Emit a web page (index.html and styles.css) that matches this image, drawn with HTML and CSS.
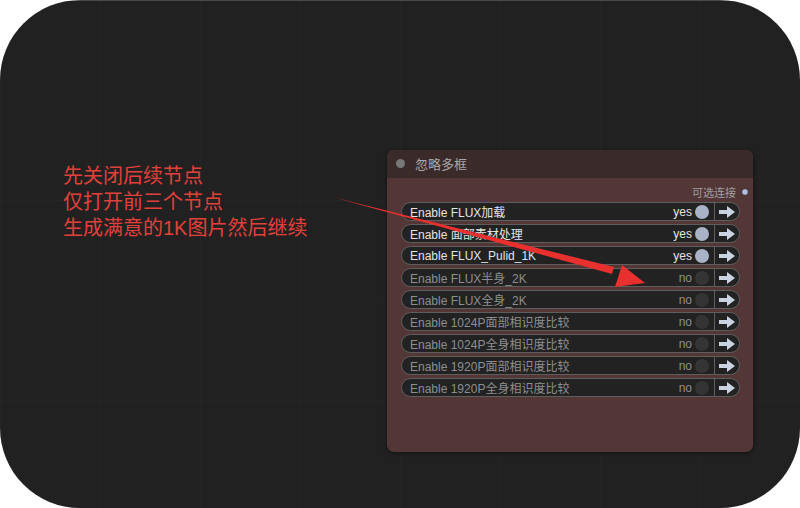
FILE: index.html
```html
<!DOCTYPE html>
<html lang="zh-CN">
<head>
    <meta charset="UTF-8">
    <title>忽略多框</title>
    <link rel="stylesheet" href="styles.css">
</head>
<body>
<div class="canvas">
    <div class="note">
        <div>先关闭后续节点</div>
        <div>仅打开前三个节点</div>
        <div>生成满意的1K图片然后继续</div>
    </div>

    <div class="node">
        <div class="node-title">
            <span class="title-dot"></span>
            <span>忽略多框</span>
        </div>
        <div class="node-body">
            <div class="output">
                <span>可选连接</span>
                <span class="socket"></span>
            </div>

            <div class="widget on">
                <span class="widget-label">Enable FLUX加载</span>
                <span class="widget-value">yes</span><span class="toggle"></span>
                <span class="go"><svg viewBox="0 0 16 12" width="16" height="12"><path d="M0 4h8V0l8 6-8 6V8H0z"/></svg></span>
            </div>
            <div class="widget on">
                <span class="widget-label">Enable 面部素材处理</span>
                <span class="widget-value">yes</span><span class="toggle"></span>
                <span class="go"><svg viewBox="0 0 16 12" width="16" height="12"><path d="M0 4h8V0l8 6-8 6V8H0z"/></svg></span>
            </div>
            <div class="widget on">
                <span class="widget-label">Enable FLUX_Pulid_1K</span>
                <span class="widget-value">yes</span><span class="toggle"></span>
                <span class="go"><svg viewBox="0 0 16 12" width="16" height="12"><path d="M0 4h8V0l8 6-8 6V8H0z"/></svg></span>
            </div>
            <div class="widget">
                <span class="widget-label">Enable FLUX半身_2K</span>
                <span class="widget-value">no</span><span class="toggle"></span>
                <span class="go"><svg viewBox="0 0 16 12" width="16" height="12"><path d="M0 4h8V0l8 6-8 6V8H0z"/></svg></span>
            </div>
            <div class="widget">
                <span class="widget-label">Enable FLUX全身_2K</span>
                <span class="widget-value">no</span><span class="toggle"></span>
                <span class="go"><svg viewBox="0 0 16 12" width="16" height="12"><path d="M0 4h8V0l8 6-8 6V8H0z"/></svg></span>
            </div>
            <div class="widget">
                <span class="widget-label">Enable 1024P面部相识度比较</span>
                <span class="widget-value">no</span><span class="toggle"></span>
                <span class="go"><svg viewBox="0 0 16 12" width="16" height="12"><path d="M0 4h8V0l8 6-8 6V8H0z"/></svg></span>
            </div>
            <div class="widget">
                <span class="widget-label">Enable 1024P全身相识度比较</span>
                <span class="widget-value">no</span><span class="toggle"></span>
                <span class="go"><svg viewBox="0 0 16 12" width="16" height="12"><path d="M0 4h8V0l8 6-8 6V8H0z"/></svg></span>
            </div>
            <div class="widget">
                <span class="widget-label">Enable 1920P面部相识度比较</span>
                <span class="widget-value">no</span><span class="toggle"></span>
                <span class="go"><svg viewBox="0 0 16 12" width="16" height="12"><path d="M0 4h8V0l8 6-8 6V8H0z"/></svg></span>
            </div>
            <div class="widget">
                <span class="widget-label">Enable 1920P全身相识度比较</span>
                <span class="widget-value">no</span><span class="toggle"></span>
                <span class="go"><svg viewBox="0 0 16 12" width="16" height="12"><path d="M0 4h8V0l8 6-8 6V8H0z"/></svg></span>
            </div>
        </div>
    </div>

    <!-- red annotation arrow drawn over the node -->
    <svg class="arrow" width="800" height="508" viewBox="0 0 800 508">
        <path d="M334 197.5 L614 267 L612 274 Z" fill="#e8302e"/>
        <path d="M645 283 L622 265 L615 287 Z" fill="#e8302e"/>
    </svg>
</div>
</body>
</html>
```

FILE: styles.css
```css
body {
    margin: 0;
    padding: 0;
    background-color: #fff;
    font-family: "Liberation Sans", "Noto Sans CJK SC", sans-serif;
}

.canvas {
    position: relative;
    width: 800px;
    height: 508px;
    border-radius: 80px;
    overflow: hidden;
    background-color: #212121;
    background-image:
        linear-gradient(#4a4a4a 1px, transparent 1px),
        linear-gradient(90deg, rgba(255, 255, 255, 0.012) 1px, transparent 1px),
        linear-gradient(rgba(255, 255, 255, 0.012) 1px, transparent 1px);
    background-size: 100% 100%, 100px 100px, 100px 100px;
    background-repeat: no-repeat, repeat, repeat;
}

.note {
    position: absolute;
    left: 63px;
    top: 163px;
    color: #e2403b;
    font-size: 20px;
    line-height: 26px;
}

.node {
    position: absolute;
    left: 387px;
    top: 150px;
    width: 366px;
    height: 302px;
    border-radius: 7px;
    background-color: #533636;
    box-shadow: 0 1px 4px rgba(0, 0, 0, 0.5);
    overflow: hidden;
}

.node-title {
    display: flex;
    align-items: center;
    gap: 10px;
    height: 26px;
    padding-bottom: 2px;
    padding-left: 9px;
    background-color: #3b2a2a;
    color: #a8a8a8;
    font-size: 13px;
}

.title-dot {
    width: 9px;
    height: 9px;
    border-radius: 50%;
    background-color: #777;
}

.node-body {
    display: flex;
    flex-direction: column;
    gap: 3px;
    padding: 7px 13px 0 14px;
}

.output {
    display: flex;
    justify-content: flex-end;
    align-items: center;
    gap: 5px;
    height: 14px;
    margin-right: -9px;
    color: #a0a0a0;
    font-size: 11px;
}

.socket {
    width: 6px;
    height: 6px;
    border-radius: 50%;
    background-color: #b8b8d8;
    border: 1px solid #2a2a2a;
}

.widget {
    display: flex;
    align-items: center;
    height: 17px;
    border: 1px solid #5e5e5e;
    border-radius: 10px;
    background-color: #222;
    color: #8e8e8e;
    font-size: 12px;
}

.widget.on {
    color: #e4e4e4;
}

.widget-label {
    flex: 1;
    padding-left: 8px;
    white-space: nowrap;
}

.widget-value {
    margin-right: 3px;
}

.toggle {
    width: 14px;
    height: 14px;
    border-radius: 50%;
    background-color: #343434;
    margin-right: 5px;
}

.widget.on .toggle {
    background-color: #a9b2c6;
}

.go {
    display: flex;
    align-items: center;
    justify-content: center;
    height: 100%;
    width: 24px;
    border-left: 1px solid #5e5e5e;
}

.go svg {
    fill: #c9d3e2;
}

.arrow {
    position: absolute;
    left: 0;
    top: 0;
    pointer-events: none;
}
```
